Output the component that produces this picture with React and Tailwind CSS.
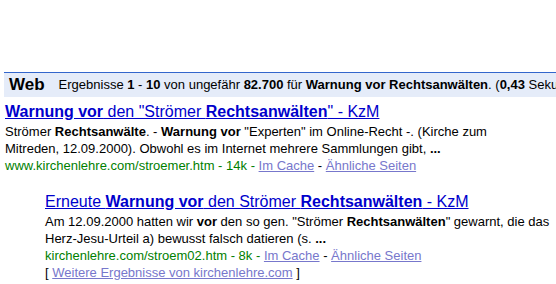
import React from "react";

const link = "text-[#0000cc] underline";
const cached = "text-[#7777cc] underline";

export default function App() {
  return (
    <div className="w-[556px] h-[284px] overflow-hidden bg-white font-['Liberation_Sans',Arial,sans-serif] text-[13px] text-black">
      <div className="h-[72px]" />

      {/* Results bar */}
      <div className="ml-[4px] w-[700px] h-[25px] border-t border-[#3366cc] bg-[#e5ecf9] flex items-center pl-[5px] whitespace-nowrap">
        <span className="font-bold text-[17px] mr-[14px]">Web</span>
        <span>
          Ergebnisse <b>1</b> - <b>10</b> von ungefähr <b>82.700</b> für <b>Warnung vor Rechtsanwälten</b>. (<b>0,43</b> Sekunden)
        </span>
      </div>

      {/* Result 1 */}
      <div className="mt-[4px] ml-[5px] leading-[17px]">
        <div className="text-[16px] leading-[22px]">
          <a className={link}>
            <b>Warnung vor</b> den "Strömer <b>Rechtsanwälten</b>" - KzM
          </a>
        </div>
        <div className="w-[500px]">
          Strömer <b>Rechtsanwälte</b>. - <b>Warnung vor</b> "Experten" im Online-Recht -. (Kirche zum
          Mitreden, 12.09.2000). Obwohl es im Internet mehrere Sammlungen gibt, <b>...</b>
        </div>
        <div className="whitespace-nowrap">
          <span className="text-[#008000]">www.kirchenlehre.com/stroemer.htm - 14k - </span>
          <a className={cached}>Im Cache</a> - <a className={cached}>Ähnliche Seiten</a>
        </div>
      </div>

      {/* Result 2 (indented) */}
      <div className="mt-[17px] ml-[45px] leading-[17px]">
        <div className="text-[16px] leading-[22px]">
          <a className={link}>
            Erneute <b>Warnung vor</b> den Strömer <b>Rechtsanwälten</b> - KzM
          </a>
        </div>
        <div className="whitespace-nowrap">
          Am 12.09.2000 hatten wir <b>vor</b> den so gen. "Strömer <b>Rechtsanwälten</b>" gewarnt, die das
        </div>
        <div>
          Herz-Jesu-Urteil a) bewusst falsch datieren (s. <b>...</b>
        </div>
        <div className="whitespace-nowrap">
          <span className="text-[#008000]">kirchenlehre.com/stroem02.htm - 8k - </span>
          <a className={cached}>Im Cache</a> - <a className={cached}>Ähnliche Seiten</a>
        </div>
        <div className="whitespace-nowrap">
          [ <a className={cached}>Weitere Ergebnisse von kirchenlehre.com</a> ]
        </div>
      </div>
    </div>
  );
}
